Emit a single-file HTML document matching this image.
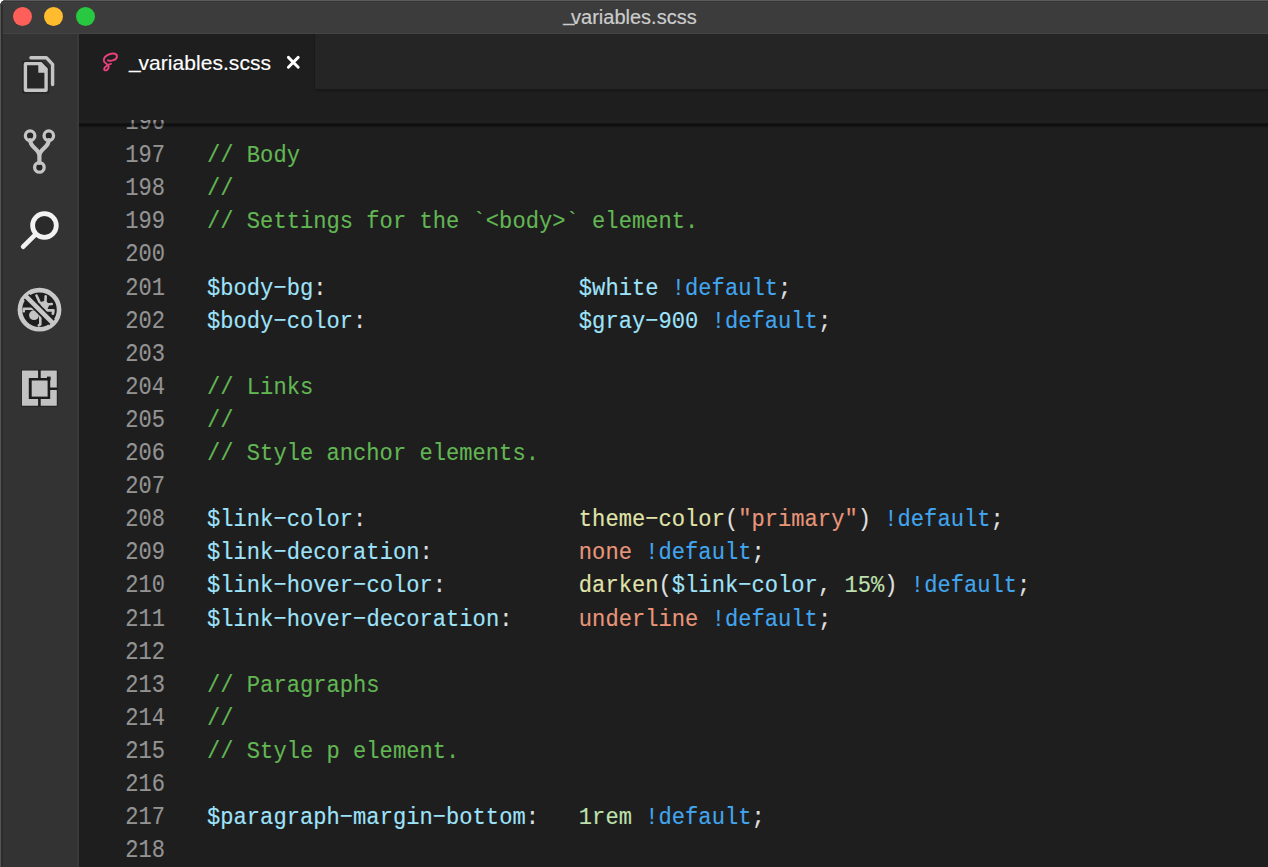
<!DOCTYPE html>
<html><head><meta charset="utf-8">
<style>
*{margin:0;padding:0;box-sizing:border-box}
html,body{width:1268px;height:867px;overflow:hidden;background:#fff}
#win{position:absolute;left:0;top:0;width:1268px;height:867px;border-radius:6px 0 0 0;overflow:hidden;background:#1e1e1e}
#title{position:absolute;left:0;top:0;width:1268px;height:34px;background:#3c3c3c;border-top:1px solid #5a5a5a;border-bottom:1px solid #444444;box-shadow:inset 0 1px 0 #353535,inset 0 2px 0 #3f3f3f}
#title .t{position:absolute;left:-4px;top:0;width:1268px;text-align:center;font:20px/32px "Liberation Sans",sans-serif;letter-spacing:0px;color:#cccccc;-webkit-text-stroke:0.2px}
.dot{position:absolute;top:6px;width:19px;height:19px;border-radius:50%}
#act{position:absolute;left:0;top:34px;width:79px;height:833px;background:#333333;border-right:2px solid #393939}
#tabs{position:absolute;left:79px;top:34px;width:1189px;height:55px;background:#252526}
#tab{position:absolute;left:0;top:0;width:236px;height:55px;background:#1e1e1e;border-right:1.5px solid #1a1a1a}
#tab .t{position:absolute;left:50px;top:1px;font:21px/55px "Liberation Sans",sans-serif;letter-spacing:0.05px;color:#ffffff;-webkit-text-stroke:0.15px}
#bc{position:absolute;left:79px;top:89px;width:1189px;height:31px;background:#1e1e1e}
#ed{position:absolute;left:79px;top:120px;width:1189px;height:747px;background:#1e1e1e;overflow:hidden}
#shadow{position:absolute;left:79px;top:120px;width:1189px;height:10px;background:linear-gradient(to bottom,rgba(255,255,255,0) 0px,rgba(255,255,255,.02) 1.5px,rgba(0,0,0,0) 2.5px,rgba(0,0,0,.5) 4.2px,rgba(0,0,0,.5) 5.5px,rgba(0,0,0,.12) 7px,rgba(0,0,0,0) 9px)}
#code{position:absolute;left:0;top:-13px;font-family:"Liberation Mono",monospace;font-size:22.1px;letter-spacing:0.02px;line-height:33.1px;white-space:pre}
.ln,.cl{transform:scaleY(1.1);transform-origin:0 22.4px;-webkit-text-stroke:0.12px}
.ln{position:absolute;left:0;width:86px;text-align:right;color:#939393;transform:scaleY(1.16)}
.cl{position:absolute;left:128px;color:#e0e0e0}
.h{position:relative;top:0.4px}
.c{color:#62b653}.v{color:#9fe3fb}.f{color:#e0e4ab}.s{color:#e8967a}.k{color:#42a6ee}.n{color:#bfe0ae}
svg{position:absolute;left:0;top:0}
</style></head><body>
<div id="win">
 <div id="title">
  <div class="dot" style="left:12.7px;background:#fe5f58"></div>
  <div class="dot" style="left:44.2px;background:#febc2e"></div>
  <div class="dot" style="left:75.7px;background:#28c840"></div>
  <div class="t"><span style="letter-spacing:-3.4px;position:relative;top:-3px">_</span>variables.scss</div>
 </div>
 <div id="act"></div>
 <div id="tabs"><div id="tab"><div class="t"><span style="letter-spacing:-2.2px;position:relative;top:-2px">_</span>variables.scss</div></div></div>
 <div id="bc"></div>
 <div style="position:absolute;left:315px;top:89px;width:953px;height:4px;background:linear-gradient(to bottom,rgba(0,0,0,.25),rgba(0,0,0,0))"></div>
 <div id="ed">
  <div id="code">
<div class="ln" style="top:0px">196</div>
<div class="ln" style="top:33.1px">197</div><div class="cl" style="top:33.1px"><span class="c">// Body</span></div>
<div class="ln" style="top:66.2px">198</div><div class="cl" style="top:66.2px"><span class="c">//</span></div>
<div class="ln" style="top:99.3px">199</div><div class="cl" style="top:99.3px"><span class="c">// Settings for the `&lt;body&gt;` element.</span></div>
<div class="ln" style="top:132.4px">200</div>
<div class="ln" style="top:165.5px">201</div><div class="cl" style="top:165.5px"><span class="v">$body<span class="h">&#8722;</span>bg</span>:                   <span class="v">$white</span> <span class="k">!default</span>;</div>
<div class="ln" style="top:198.6px">202</div><div class="cl" style="top:198.6px"><span class="v">$body<span class="h">&#8722;</span>color</span>:                <span class="v">$gray<span class="h">&#8722;</span>900</span> <span class="k">!default</span>;</div>
<div class="ln" style="top:231.7px">203</div>
<div class="ln" style="top:264.8px">204</div><div class="cl" style="top:264.8px"><span class="c">// Links</span></div>
<div class="ln" style="top:297.9px">205</div><div class="cl" style="top:297.9px"><span class="c">//</span></div>
<div class="ln" style="top:331px">206</div><div class="cl" style="top:331px"><span class="c">// Style anchor elements.</span></div>
<div class="ln" style="top:364.1px">207</div>
<div class="ln" style="top:397.2px">208</div><div class="cl" style="top:397.2px"><span class="v">$link<span class="h">&#8722;</span>color</span>:                <span class="f">theme<span class="h">&#8722;</span>color</span>(<span class="s">"primary"</span>) <span class="k">!default</span>;</div>
<div class="ln" style="top:430.3px">209</div><div class="cl" style="top:430.3px"><span class="v">$link<span class="h">&#8722;</span>decoration</span>:           <span class="s">none</span> <span class="k">!default</span>;</div>
<div class="ln" style="top:463.4px">210</div><div class="cl" style="top:463.4px"><span class="v">$link<span class="h">&#8722;</span>hover<span class="h">&#8722;</span>color</span>:          <span class="f">darken</span>(<span class="v">$link<span class="h">&#8722;</span>color</span>, <span class="n">15%</span>) <span class="k">!default</span>;</div>
<div class="ln" style="top:496.5px">211</div><div class="cl" style="top:496.5px"><span class="v">$link<span class="h">&#8722;</span>hover<span class="h">&#8722;</span>decoration</span>:     <span class="s">underline</span> <span class="k">!default</span>;</div>
<div class="ln" style="top:529.6px">212</div>
<div class="ln" style="top:562.7px">213</div><div class="cl" style="top:562.7px"><span class="c">// Paragraphs</span></div>
<div class="ln" style="top:595.8px">214</div><div class="cl" style="top:595.8px"><span class="c">//</span></div>
<div class="ln" style="top:628.9px">215</div><div class="cl" style="top:628.9px"><span class="c">// Style p element.</span></div>
<div class="ln" style="top:662px">216</div>
<div class="ln" style="top:695.1px">217</div><div class="cl" style="top:695.1px"><span class="v">$paragraph<span class="h">&#8722;</span>margin<span class="h">&#8722;</span>bottom</span>:   <span class="n">1rem</span> <span class="k">!default</span>;</div>
<div class="ln" style="top:728.2px">218</div>
  </div>
 </div>
 <div id="shadow"></div>
 <div style="position:absolute;left:0;top:5px;width:1px;height:862px;background:#555"></div>
 <div style="position:absolute;left:1px;top:5px;width:1.5px;height:862px;background:#2c2c2c"></div>
 <svg width="320" height="420" viewBox="0 0 320 420">
  <!-- files icon -->
  <g fill="none" stroke="#c5c5c5" stroke-width="3.4" stroke-linejoin="round">
   <path d="M30.9 57.7 L46.3 57.7 L52.6 64.3 L52.6 84.5" stroke-linecap="round"/>
  </g>
  <path d="M22.2 60.4 L42.2 60.4 L49.3 67.8 L49.3 93.4 L22.2 93.4 Z" fill="#262626"/>
  <path fill="#c5c5c5" fill-rule="evenodd" d="M25.7 61.9 L41.5 61.9 L47.8 68.5 L47.8 89.9 Q47.8 91.9 45.8 91.9 L25.7 91.9 Q23.7 91.9 23.7 89.9 L23.7 63.9 Q23.7 61.9 25.7 61.9 Z M27.1 65.3 L38.3 65.3 L38.3 72.8 L44.4 72.8 L44.4 88.5 L27.1 88.5 Z"/>
  <!-- git icon -->
  <g fill="none" stroke="#c5c5c5" stroke-linejoin="round" stroke-linecap="round">
   <circle cx="30.1" cy="135.7" r="4.75" stroke-width="3.3" fill="#262626"/>
   <circle cx="48.8" cy="135.7" r="4.75" stroke-width="3.3" fill="#262626"/>
   <circle cx="39.4" cy="167.4" r="4.75" stroke-width="3.3" fill="#262626"/>
   <path d="M30.1 140 C30.1 148 39.4 148.5 39.4 156 L39.4 163 M48.8 140 C48.8 148 39.4 148.5 39.4 156" stroke-width="4.2"/>
  </g>
  <!-- search icon -->
  <g fill="none" stroke="#f2f2f2" stroke-width="4.8" stroke-linecap="round">
   <circle cx="44.45" cy="225.5" r="11.85" fill="#2a2a2a"/>
   <path d="M23.2 246.6 L34.6 235.4"/>
  </g>
  <!-- debug icon -->
  <circle cx="39.5" cy="309.7" r="19.5" fill="#1f1f1f"/>
  <circle cx="39.5" cy="309.7" r="19.6" fill="none" stroke="#c8c8c8" stroke-width="4.6"/>
  <g fill="#c4c4c4" stroke="#c4c4c4" stroke-linecap="round" stroke-linejoin="round">
   <circle cx="34" cy="315.2" r="4.9" stroke="none"/>
   <path d="M23.7 311.3 L23.9 308.8 L33 308.8" fill="none" stroke-width="2.6"/>
   <path d="M40.3 316 L40.3 324.4 L38.8 325.3" fill="none" stroke-width="2.6"/>
   <path d="M39.9 302.8 L45.3 301.4 L48.8 304.5 L47 308.8 L42.8 307.8 Z" stroke-width="1.2"/>
   <path d="M36.5 295.5 L39.6 302.2" fill="none" stroke-width="2.6"/>
   <path d="M45.7 296.2 L45.4 302" fill="none" stroke-width="2.6"/>
   <path d="M47 304.3 L51.9 304" fill="none" stroke-width="2.3"/>
   <path d="M45.8 310.4 L53.4 310.4 L52.9 313.6" fill="none" stroke-width="2.8"/>
  </g>
  <path d="M26.5 296.8 L52 322.3" stroke="#1f1f1f" stroke-width="8"/>
  <path d="M24.8 295.1 L53.6 323.9" stroke="#c8c8c8" stroke-width="4.5"/>
  <!-- extensions icon -->
  <rect x="21" y="369.8" width="36.6" height="36.8" fill="#1c1c1c"/>
  <g fill="#c2c2c2">
   <path d="M21.9 370.6 H38.1 V377.9 H28.8 V398.9 H38.1 V405.8 H21.9 Z"/>
   <path d="M40.7 370.6 H56.8 V387.4 H50.2 V377.9 H40.7 Z"/>
   <path d="M40.7 398.9 H50.2 V390 H56.8 V405.8 H40.7 Z"/>
   <rect x="31.7" y="380.5" width="15.9" height="16.1"/>
  </g>
  <rect x="47" y="376.6" width="3.6" height="3.6" fill="#1c1c1c"/>
  <!-- sass icon -->
  <path d="M108 60.3 C111 61.5 116.5 60 117 56.5 C117.3 53.5 113 53 110 54 C106 55.3 103.5 58 103.8 60.9 C104 63 108.5 64 108.7 66.5 C108.9 69 106 71.2 104.5 70 C103.3 68.8 106 65 110.9 63.8" fill="none" stroke="#e8407d" stroke-width="1.9" stroke-linecap="round"/>
  <!-- close -->
  <path d="M288.4 57.4 L298.2 67.2 M298.2 57.4 L288.4 67.2" stroke="#ffffff" stroke-width="2.9" stroke-linecap="round"/>
 </svg>
</div>
</body></html>
